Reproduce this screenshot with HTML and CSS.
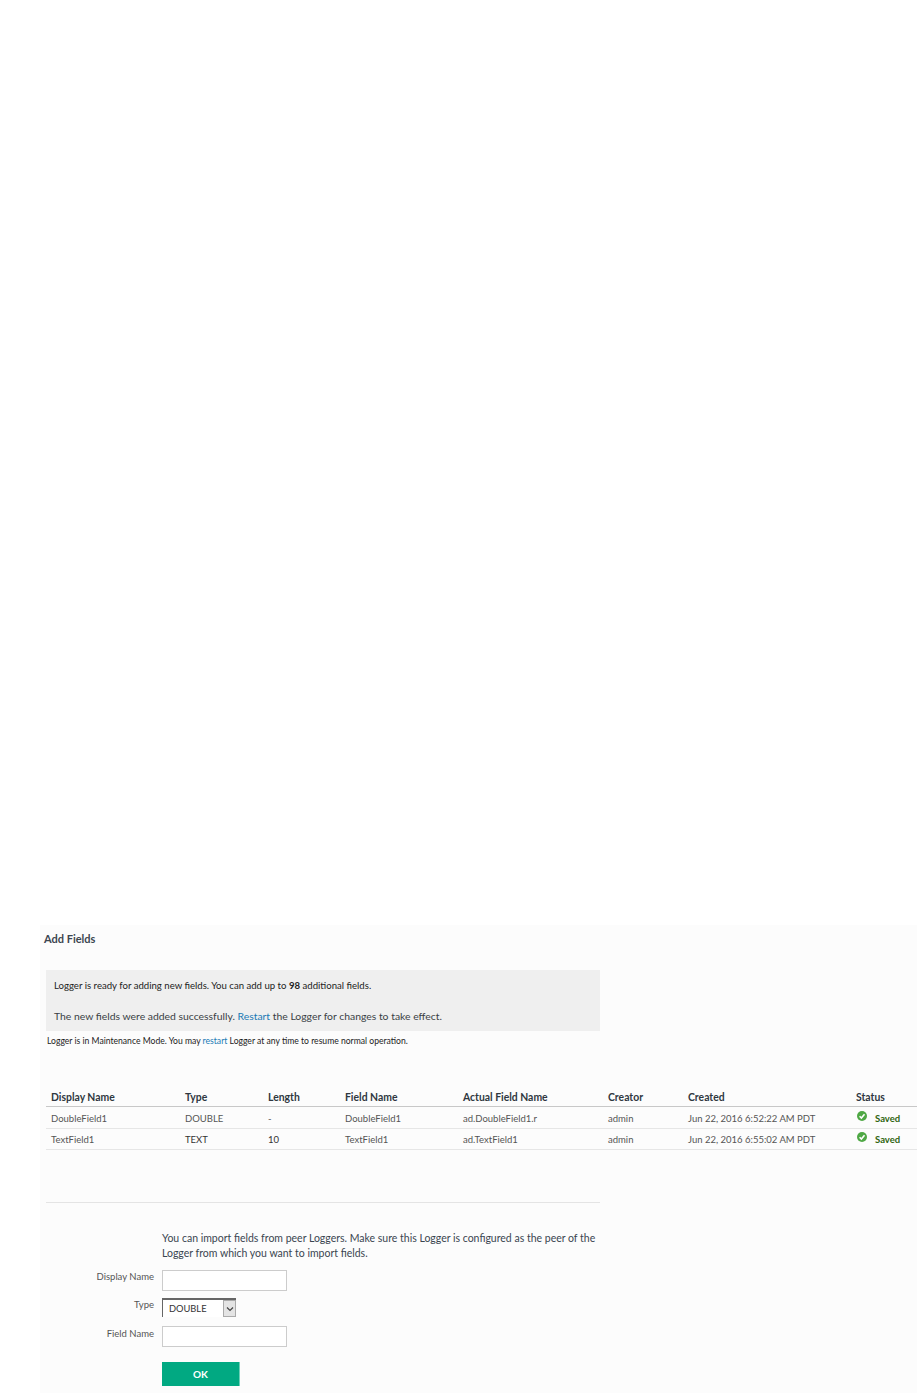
FILE: index.html
```html
<!DOCTYPE html>
<html>
<head>
  <title>Add Fields</title>
  <link rel="stylesheet" href="styles.css">
</head>
<body>
  <div class="panel">
    <h1 class="titulo">Add Fields</h1>

    <div class="aviso">
      <p class="aviso-linha">Logger is ready for adding new fields. You can add up to <b>98</b> additional fields.</p>
      <p class="aviso-sucesso">The new fields were added successfully. <a href="#">Restart</a> the Logger for changes to take effect.</p>
    </div>
    <p class="manutencao">Logger is in Maintenance Mode. You may <a href="#">restart</a> Logger at any time to resume normal operation.</p>

    <table class="campos">
      <thead>
        <tr>
          <th class="col-nome">Display Name</th>
          <th class="col-tipo">Type</th>
          <th class="col-tam">Length</th>
          <th class="col-campo">Field Name</th>
          <th class="col-real">Actual Field Name</th>
          <th class="col-criador">Creator</th>
          <th class="col-data">Created</th>
          <th>Status</th>
        </tr>
      </thead>
      <tbody>
        <tr class="linha-alta">
          <td>DoubleField1</td>
          <td>DOUBLE</td>
          <td>-</td>
          <td>DoubleField1</td>
          <td>ad.DoubleField1.r</td>
          <td>admin</td>
          <td>Jun 22, 2016 6:52:22 AM PDT</td>
          <td>
            <span class="status">
              <svg class="icone-ok" viewBox="0 0 10 10"><circle cx="5" cy="5" r="5" fill="#4fa845"/><path d="M2.6 5.2 L4.4 7 L7.5 3.2" fill="none" stroke="#fff" stroke-width="1.6"/></svg>
              Saved
            </span>
          </td>
        </tr>
        <tr>
          <td>TextField1</td>
          <td class="escuro">TEXT</td>
          <td class="escuro">10</td>
          <td>TextField1</td>
          <td>ad.TextField1</td>
          <td>admin</td>
          <td>Jun 22, 2016 6:55:02 AM PDT</td>
          <td>
            <span class="status">
              <svg class="icone-ok" viewBox="0 0 10 10"><circle cx="5" cy="5" r="5" fill="#4fa845"/><path d="M2.6 5.2 L4.4 7 L7.5 3.2" fill="none" stroke="#fff" stroke-width="1.6"/></svg>
              Saved
            </span>
          </td>
        </tr>
      </tbody>
    </table>

    <div class="importar">
      <p class="importar-texto">You can import fields from peer Loggers. Make sure this Logger is configured as the peer of the Logger from which you want to import fields.</p>
      <div class="linha-form">
        <label class="rotulo">Display Name</label>
        <input class="entrada" type="text">
      </div>
      <div class="linha-form">
        <label class="rotulo">Type</label>
        <div class="seletor">
          <span class="seletor-valor">DOUBLE</span>
          <span class="seletor-seta">
            <svg viewBox="0 0 8 6" width="8" height="6"><path d="M1 1.5 L4 4.5 L7 1.5" fill="none" stroke="#444" stroke-width="1.2"/></svg>
          </span>
        </div>
      </div>
      <div class="linha-form linha-campo">
        <label class="rotulo">Field Name</label>
        <input class="entrada" type="text">
      </div>
      <button class="botao-ok">OK</button>
    </div>
  </div>
</body>
</html>
```

FILE: styles.css
```css
body {
  margin: 0;
  padding: 925px 0 0 40px;
  background-color: #fff;
  color: #333;
  font-family: Lato, "Open Sans", sans-serif;
  font-size: 9.6px;
}

a {
  color: #1a7ab5;
  text-decoration: none;
}

.panel {
  height: 468px;
  padding-left: 4px;
  background-color: #fcfcfc;
  box-sizing: border-box;
  overflow: hidden;
}

.titulo {
  margin: 7px 0 0 0;
  font-size: 11px;
  line-height: 13px;
  font-weight: bold;
  color: #3c4650;
}

.aviso {
  width: 554px;
  height: 61px;
  margin: 25px 0 0 2px;
  padding: 10px 0 0 8px;
  box-sizing: border-box;
  background-color: #efefef;
  color: #222;
}

.aviso-linha {
  margin: 0;
  line-height: 12px;
}

.aviso-sucesso {
  margin: 17px 0 0 0;
  line-height: 14px;
  font-size: 10.4px;
  color: #3a3f45;
}

.manutencao {
  margin: 4px 0 0 3px;
  font-size: 8.6px;
  line-height: 12px;
  color: #222;
}

.campos {
  width: 871px;
  margin: 44px 0 0 2px;
  border-collapse: collapse;
  table-layout: fixed;
}

.campos th {
  padding: 0 0 3px 5px;
  height: 12px;
  text-align: left;
  font-size: 10.4px;
  font-weight: bold;
  color: #2f3740;
  border-bottom: 1px solid #c8c8c8;
}

.campos td {
  height: 20px;
  padding: 0 0 0 5px;
  font-size: 9.5px;
  color: #555;
  border-bottom: 1px solid #e6e6e6;
}

.campos .linha-alta td {
  padding-top: 1px;
}

.campos td.escuro {
  color: #333;
}

.col-nome { width: 129px; }
.col-tipo { width: 78px; }
.col-tam { width: 72px; }
.col-campo { width: 113px; }
.col-real { width: 140px; }
.col-criador { width: 75px; }
.col-data { width: 163px; }

.status {
  display: flex;
  align-items: center;
  gap: 8px;
  font-weight: bold;
  font-size: 9.5px;
  color: #2f6410;
}

.icone-ok {
  width: 10px;
  height: 10px;
  margin: -4px 0 0 1px;
}

.importar {
  width: 554px;
  margin: 52px 0 0 2px;
  padding: 28px 0 0 0;
  border-top: 1px solid #e4e4e4;
}

.importar-texto {
  margin: 0 0 0 116px;
  line-height: 15px;
  font-size: 10.5px;
  color: #3a4550;
}

.linha-form {
  display: flex;
  align-items: flex-start;
  gap: 8px;
  margin-top: 9px;
}

.linha-form + .linha-form {
  margin-top: 7px;
}

.linha-form.linha-campo {
  margin-top: 9px;
}

.rotulo {
  width: 108px;
  padding-top: 1px;
  text-align: right;
  font-size: 9.5px;
  line-height: 12px;
  color: #555;
}

.linha-campo .rotulo {
  padding-top: 2px;
}

.entrada {
  width: 125px;
  height: 21px;
  margin: 0;
  padding: 0;
  box-sizing: border-box;
  background-color: #fff;
  border: 1px solid #ccc;
}

.seletor {
  display: flex;
  width: 74px;
  height: 19px;
  box-sizing: border-box;
  background-color: #fff;
  border-top: 2px solid #666;
  border-left: 1px solid #666;
}

.seletor-valor {
  flex: 1;
  padding-left: 6px;
  line-height: 18px;
  font-size: 9.3px;
  color: #333;
}

.seletor-seta {
  display: flex;
  align-items: center;
  justify-content: center;
  width: 13px;
  background-color: #e4e4e4;
  border: 1px solid #aaa;
  box-sizing: border-box;
}

.botao-ok {
  display: block;
  width: 78px;
  height: 24px;
  margin: 15px 0 0 116px;
  padding: 0;
  background-color: #01a982;
  border: none;
  border-right: 1px solid #6fd0b8;
  color: #fff;
  font-family: Lato, "Open Sans", sans-serif;
  font-size: 10px;
  font-weight: bold;
}
```
